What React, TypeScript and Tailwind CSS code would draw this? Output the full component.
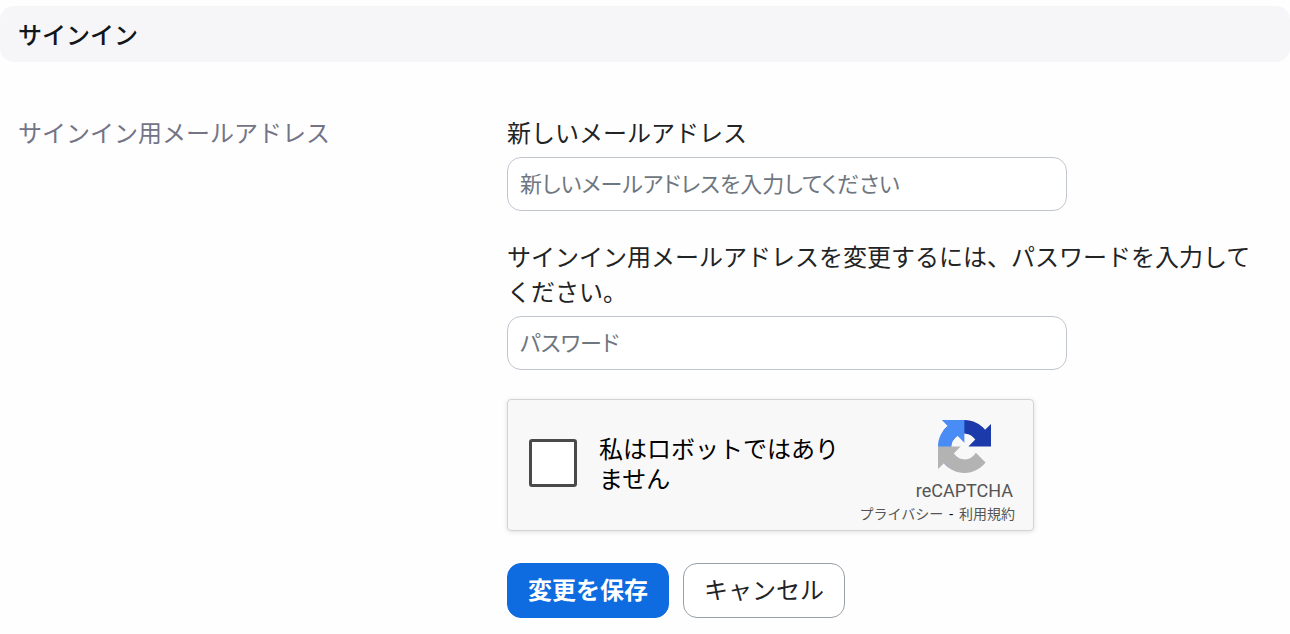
import { useState } from "react";
import type { FormEvent, InputHTMLAttributes } from "react";

type FieldProps = InputHTMLAttributes<HTMLInputElement> & {
  id: string;
  label: string;
};

function Field({ id, label, ...props }: FieldProps) {
  return (
    <div className="flex flex-col gap-[5px]">
      <label htmlFor={id} className="leading-[35px] text-[#222325]">
        {label}
      </label>
      <input
        id={id}
        className="h-[54px] w-full max-w-[560px] rounded-[14px] border border-[#c1c6ce] bg-white px-3 text-[22px] text-[#222325] [font-feature-settings:'palt'] placeholder:text-[#6e7680] focus:border-[#0e72ed] focus:outline-none"
        {...props}
      />
    </div>
  );
}

function RecaptchaLogo() {
  return (
    <svg viewBox="0 0 64 64" className="size-[53px]" aria-hidden="true">
      <path
        fill="#1c3aa9"
        d="M64 31.955l-.033-1.37V4.687l-7.16 7.16C50.948 4.674 42.033.093 32.05.093c-10.4 0-19.622 4.96-25.458 12.64l11.736 11.86a15.55 15.55 0 0 1 4.754-5.334c2.05-1.6 4.952-2.906 8.968-2.906.485 0 .86.057 1.135.163 4.976.393 9.288 3.14 11.828 7.124l-8.307 8.307L64 31.953"
      />
      <path
        fill="#4a8cf6"
        d="M31.862.094l-1.37.033H4.594l7.16 7.16C4.58 13.147 0 22.06 0 32.046c0 10.4 4.96 19.622 12.64 25.458L24.5 45.768a15.55 15.55 0 0 1-5.334-4.754c-1.6-2.05-2.906-4.952-2.906-8.968 0-.485.057-.86.163-1.135.393-4.976 3.14-9.288 7.124-11.828l8.307 8.307L31.86.095"
      />
      <path
        fill="#b3b3b3"
        d="M.001 32.045l.033 1.37v25.898l7.16-7.16c5.86 7.173 14.774 11.754 24.76 11.754 10.4 0 19.622-4.96 25.458-12.64l-11.736-11.86a15.55 15.55 0 0 1-4.754 5.334c-2.05 1.6-4.952 2.906-8.968 2.906-.485 0-.86-.057-1.135-.163-4.976-.393-9.288-3.14-11.828-7.124l8.307-8.307c-10.522.04-22.4.066-27.295-.005"
      />
    </svg>
  );
}

function Recaptcha() {
  const [checked, setChecked] = useState(false);

  return (
    <div className="flex max-w-[527px] items-stretch justify-between rounded-[4px] border border-[#d3d3d3] bg-[#f8f8f8] pr-[18px] pl-[21px] shadow-[0_1px_5px_rgba(0,0,0,0.12)]">
      <div className="flex items-center gap-[22px] pb-1">
        <input
          id="not-robot"
          type="checkbox"
          checked={checked}
          onChange={(e) => setChecked(e.target.checked)}
          className="size-12 shrink-0 appearance-none rounded-[3px] border-3 border-[#4a4a4a] bg-white checked:bg-[#4285f4]"
        />
        <label htmlFor="not-robot" className="w-[252px] pt-1 leading-[30px] text-black">
          私はロボットではありません
        </label>
      </div>
      <div className="flex flex-col items-end pt-5 pb-[5px] text-[#555]">
        <div className="flex flex-col items-center pr-0.5">
          <RecaptchaLogo />
          <span className="pt-1.5 text-[18px] leading-6">reCAPTCHA</span>
        </div>
        <div className="flex gap-1.5 text-[14px] leading-[22px] whitespace-nowrap">
          <a href="#privacy">プライバシー</a>
          <span aria-hidden="true" className="text-black">
            -
          </span>
          <a href="#terms">利用規約</a>
        </div>
      </div>
    </div>
  );
}

export default function App() {
  const [email, setEmail] = useState("");
  const [password, setPassword] = useState("");

  const handleSubmit = (e: FormEvent) => {
    e.preventDefault();
  };

  const handleCancel = () => {
    setEmail("");
    setPassword("");
  };

  return (
    <main className="bg-[#fefefe] pt-1.5 pb-4 font-[Roboto,'Noto_Sans_CJK_JP',sans-serif] text-[24px]">
      <h2 className="rounded-[14px] bg-[#f6f6f9] px-[18px] pt-3 pb-2 leading-9 font-medium text-[#131619]">
        サインイン
      </h2>

      <section className="grid grid-cols-[39%_1fr] px-[18px] pt-[55px]">
        <h3 className="leading-[35px] text-[#747487]">サインイン用メールアドレス</h3>

        <form onSubmit={handleSubmit} className="flex flex-col">
          <div className="flex flex-col gap-[30px]">
            <Field
              id="email"
              type="email"
              label="新しいメールアドレス"
              placeholder="新しいメールアドレスを入力してください"
              value={email}
              onChange={(e) => setEmail(e.target.value)}
            />
            <Field
              id="password"
              type="password"
              label="サインイン用メールアドレスを変更するには、パスワードを入力してください。"
              placeholder="パスワード"
              value={password}
              onChange={(e) => setPassword(e.target.value)}
            />
          </div>

          <div className="pt-[29px] pb-8">
            <Recaptcha />
          </div>

          <div className="flex gap-3.5">
            <button
              type="submit"
              className="h-[55px] rounded-[14px] border border-[#0e6be0] bg-[#0e6be0] px-5 font-bold text-white"
            >
              変更を保存
            </button>
            <button
              type="button"
              onClick={handleCancel}
              className="h-[55px] rounded-[14px] border border-[#98a0a9] bg-white px-5 text-[#222325]"
            >
              キャンセル
            </button>
          </div>
        </form>
      </section>
    </main>
  );
}
